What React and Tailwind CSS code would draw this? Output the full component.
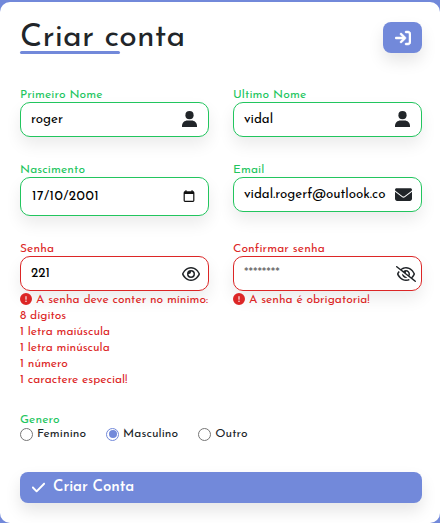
import { FaArrowRightToBracket, FaCheck, FaEnvelope, FaRegEye, FaRegEyeSlash, FaCircleExclamation } from "react-icons/fa6";

function Field({ label, error, value, muted, height = "h-[35px]", size = "text-[13.33px]", icon, children }) {
  const text = error ? "text-[#dc2626]" : "text-[#22c55e]";
  const border = error ? "border-[#dc2626]" : "border-[#22c55e]";
  return (
    <div className="w-[189px]">
      <div className={`h-[14px] text-[12px] leading-[15px] tracking-[0.1px] whitespace-nowrap ${text}`}>{label}</div>
      <div className={`flex ${height} items-center justify-between rounded-[10px] border bg-white pl-[10px] shadow-[0_8px_16px_rgba(0,0,0,0.08)] ${border}`}>
        <span className={`leading-[16px] whitespace-nowrap ${size} ${muted ? "text-[#757575]" : "text-black"}`}>{value}</span>
        {icon}
      </div>
      {children}
    </div>
  );
}

function Radio({ label, checked }) {
  return (
    <div className="flex items-center gap-1">
      <span className={`flex size-[13px] items-center justify-center rounded-full border ${checked ? "border-[#7289da]" : "border-[#767676]"}`}>
        {checked && <span className="size-[8px] rounded-full bg-[#7289da]" />}
      </span>
      <span className="text-[12px] leading-[14px] tracking-[0.08px] whitespace-nowrap">{label}</span>
    </div>
  );
}

function PersonIcon() {
  return (
    <svg className="mr-[11px] mb-[2px] shrink-0" width="15" height="16" viewBox="0 0 15 16" fill="currentColor">
      <circle cx="7.5" cy="4.2" r="4.1" />
      <path d="M0 16v-1.1C0 11.8 2.6 9.6 5.4 9.6h4.2c2.8 0 5.4 2.2 5.4 5.3V16z" />
    </svg>
  );
}

function DateIcon() {
  return (
    <svg className="mr-[13px] mb-px shrink-0" width="12" height="12" viewBox="0 0 12 12" fill="none">
      <rect x="1.2" y="2" width="9.6" height="9.3" rx="0.8" stroke="#111" strokeWidth="1.2" />
      <path d="M1 1.5h10v2.5H1zM2.3 .2h1.3v2H2.3zM8.4 .2h1.3v2H8.4z" fill="#111" />
    </svg>
  );
}

export default function App() {
  return (
    <div className="h-[523px] w-[440px] overflow-hidden bg-[#7289da] pt-[2px] font-['Josefin_Sans',Lato,sans-serif] text-[#212529]">
      <div className="h-[521px] rounded-[10px] bg-white pr-[18px] pl-[20px] pt-[20px]">
        <div className="flex h-[66px] items-start justify-between">
          <div>
            <h1 className="h-[29px] text-[32px] leading-[32px] whitespace-nowrap tracking-[0.2px]">Criar conta</h1>
            <div className="h-[3px] w-[100px] rounded-full bg-[#7289da]" />
          </div>
          <button className="flex h-[31px] w-[39px] items-center justify-center rounded-[8px] bg-[#7289da] text-white shadow-[0_8px_16px_rgba(0,0,0,0.1)]">
            <FaArrowRightToBracket size={16} stroke="currentColor" strokeWidth={16} />
          </button>
        </div>
        <div className="flex justify-between">
          <Field label="Primeiro Nome" value="roger" icon={<PersonIcon />} />
          <Field label="Ultimo Nome" value="vidal" icon={<PersonIcon />} />
        </div>
        <div className="mt-[26px] flex justify-between">
          <Field label="Nascimento" value="17/10/2001" height="h-[39px]" size="text-[13.33px] tracking-[0.5px] pl-px" icon={<DateIcon />} />
          <Field label="Email" value="vidal.rogerf@outlook.co" icon={<FaEnvelope className="mr-[9px] mb-px shrink-0" size={17} />} />
        </div>
        <div className="mt-[26px] flex h-[171px] justify-between">
          <Field error label="Senha" value="221" icon={<FaRegEye className="mr-[8px]" size={18} />}>
            <div className="pt-px text-[12px] leading-[16px] whitespace-nowrap text-[#dc2626]">
              <div className="flex h-[16px] items-center gap-1"><FaCircleExclamation className="mb-[3px] shrink-0" size={12} /><span>A senha deve conter no mínimo:</span></div>
              <div>8 dígitos</div>
              <div>1 letra maiúscula</div>
              <div>1 letra minúscula</div>
              <div>1 número</div>
              <div>1 caractere especial!</div>
            </div>
          </Field>
          <Field error muted label="Confirmar senha" value="********" icon={<FaRegEyeSlash className="mr-[5px]" size={20} />}>
            <div className="flex items-center gap-1 pt-px text-[12px] leading-[16px] whitespace-nowrap text-[#dc2626]">
              <FaCircleExclamation className="mb-[3px] shrink-0" size={12} /><span>A senha é obrigatoria!</span>
            </div>
          </Field>
        </div>
        <div className="h-[14px] text-[12px] leading-[15px] tracking-[0.1px] text-[#22c55e]">Genero</div>
        <div className="flex h-[14px] gap-[20px]">
          <Radio label="Feminino" />
          <Radio label="Masculino" checked />
          <Radio label="Outro" />
        </div>
        <button className="mt-[31px] flex h-[31px] w-full items-center gap-[7px] rounded-[8px] bg-[#7289da] pl-[11px] text-[15px] font-semibold tracking-[-0.05px] text-white shadow-[0_8px_16px_rgba(0,0,0,0.1)]">
          <FaCheck size={15} /><span className="pt-[2px]">Criar Conta</span>
        </button>
      </div>
    </div>
  );
}
